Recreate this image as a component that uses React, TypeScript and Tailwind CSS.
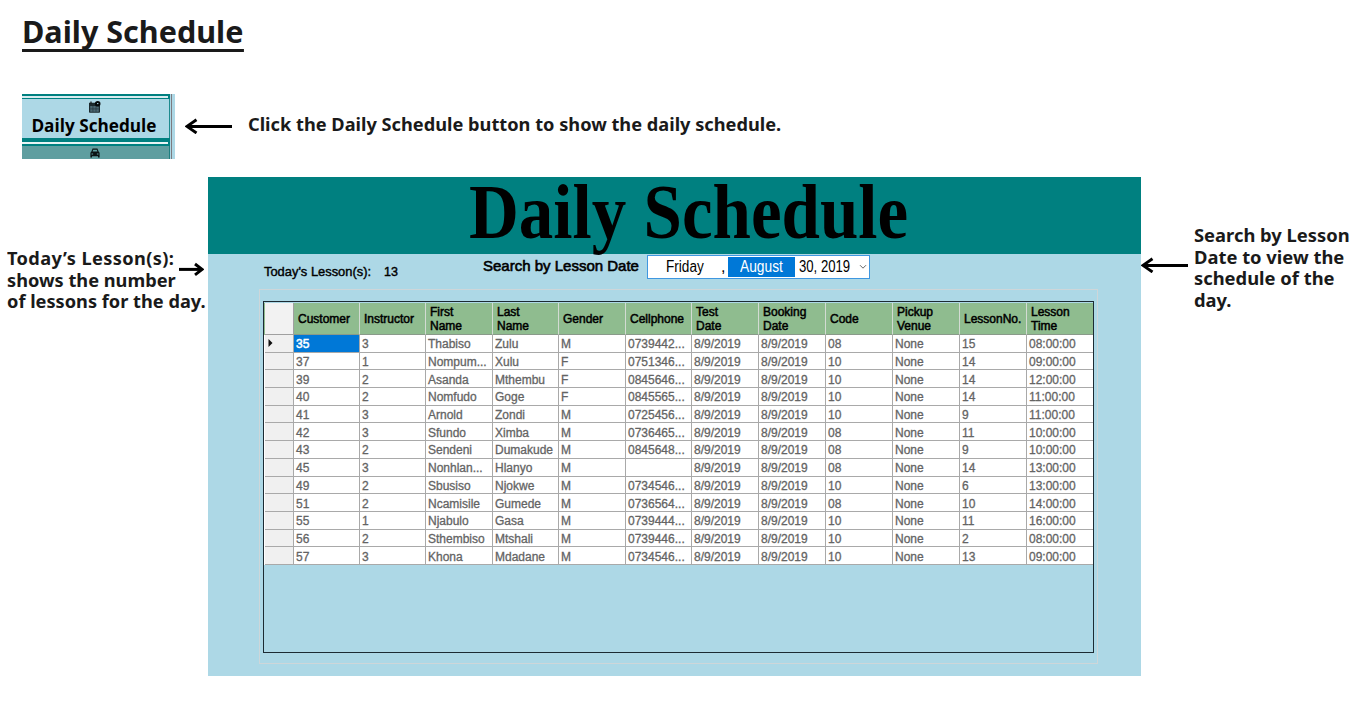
import React from 'react';

const columns = ['Customer', 'Instructor', 'First Name', 'Last Name', 'Gender', 'Cellphone', 'Test Date', 'Booking Date', 'Code', 'Pickup Venue', 'LessonNo.', 'Lesson Time'];

const rows: string[][] = [
  ['35', '3', 'Thabiso', 'Zulu', 'M', '0739442...', '08', '15', '08:00:00'],
  ['37', '1', 'Nompum...', 'Xulu', 'F', '0751346...', '10', '14', '09:00:00'],
  ['39', '2', 'Asanda', 'Mthembu', 'F', '0845646...', '10', '14', '12:00:00'],
  ['40', '2', 'Nomfudo', 'Goge', 'F', '0845565...', '10', '14', '11:00:00'],
  ['41', '3', 'Arnold', 'Zondi', 'M', '0725456...', '10', '9', '11:00:00'],
  ['42', '3', 'Sfundo', 'Ximba', 'M', '0736465...', '08', '11', '10:00:00'],
  ['43', '2', 'Sendeni', 'Dumakude', 'M', '0845648...', '08', '9', '10:00:00'],
  ['45', '3', 'Nonhlan...', 'Hlanyo', 'M', '', '08', '14', '13:00:00'],
  ['49', '2', 'Sbusiso', 'Njokwe', 'M', '0734546...', '10', '6', '13:00:00'],
  ['51', '2', 'Ncamisile', 'Gumede', 'M', '0736564...', '08', '10', '14:00:00'],
  ['55', '1', 'Njabulo', 'Gasa', 'M', '0739444...', '10', '11', '16:00:00'],
  ['56', '2', 'Sthembiso', 'Mtshali', 'M', '0739446...', '10', '2', '08:00:00'],
  ['57', '3', 'Khona', 'Mdadane', 'M', '0734546...', '10', '13', '09:00:00'],
].map(([id, ins, first, last, sex, cell, code, no, time]) => [
  id, ins, first, last, sex, cell, '8/9/2019', '8/9/2019', code, 'None', no, time,
]);

const gridCols = 'grid grid-cols-[29px_66px_66px_67px_66px_67px_66px_67px_67px_67px_67px_67px_66px]';

function Arrow({ length, flip = false }: { length: number; flip?: boolean }) {
  return (
    <svg width={length} height="16" viewBox={`0 0 ${length} 16`} fill="none" stroke="#000" className={flip ? 'shrink-0 -scale-x-100' : 'shrink-0'}>
      <path d={`M2 8.4H${length}`} strokeWidth="3" />
      <path d={flip ? 'M9 3L2 8.4L9 13.8' : 'M11.5 1.8L2 8.4L11.5 15'} strokeWidth="2.9" />
    </svg>
  );
}

function CalendarIcon() {
  return (
    <svg width="13" height="12" viewBox="0 0 13 12" className="block">
      <path d="M1 1.8h6.2a3 3 0 0 0 4.8 2.4V11a.8.8 0 0 1-.8.8H1.8A.8.8 0 0 1 1 11z" fill="#1c2a2e" />
      <path d="M2.2 5h8.6v5.8H2.2z" fill="#4c6872" />
      <path d="M2.2 7.9h8.6M4.9 5v5.8M8 5v5.8" stroke="#26373f" strokeWidth=".7" />
      <path d="M3 .4v2.2" stroke="#111" strokeWidth="1.2" />
      <circle cx="9.7" cy="2.8" r="2.8" fill="#05090a" />
      <path d="M9 2.6h1.4" stroke="#add8e6" strokeWidth="1" fill="none" />
    </svg>
  );
}

function CarIcon() {
  return (
    <svg width="10" height="10" viewBox="0 0 10 10" className="block">
      <path fillRule="evenodd" d="M2.6.5h4.8L8.6 3.6 9.6 4.8V9.6H8V8.2H2v1.4H.4V4.8L1.4 3.6zM3.2 1.7 2.6 3.6h4.8L6.8 1.7zM1.5 5.4v1.1h1.6V5.4zM6.9 5.4v1.1h1.6V5.4z" fill="#0b1314" />
    </svg>
  );
}

function MenuButton() {
  return (
    <div className="flex h-[65px] w-[153px] bg-[#add8e6]">
      <div className="flex w-[148px] flex-col">
        <div className="h-[5px] border-b border-r-2 border-t-2 border-[#008080] bg-[#d9ecf0]" />
        <div className="flex h-[39px] flex-col items-center border-r border-[#1d8b8f] pr-[2px] pt-[2px]">
          <CalendarIcon />
          <div className="mr-[2px] mt-[2px] scale-x-[1.01] whitespace-nowrap font-['Open_Sans',sans-serif] text-[17px] font-bold leading-[22px] text-black">Daily Schedule</div>
        </div>
        <div className="h-[8px] border-b-2 border-r-2 border-t-[4px] border-[#008080] bg-[#e8f4f5]" />
        <div className="flex h-[13px] justify-center overflow-hidden border-r border-[#1d7f80] bg-[#5f9ea0] pr-[2px] pt-[2px]">
          <CarIcon />
        </div>
      </div>
      <div className="ml-[1px] w-[1px] bg-[#7d7b80]" />
    </div>
  );
}

function DatePicker() {
  return (
    <div className="flex h-[24px] w-[223px] items-center border border-[#3f97e0] bg-white font-['Liberation_Sans',sans-serif] text-[16px] leading-[20px] text-black">
      <div className="w-[73px] pl-[17.5px]"><span className="inline-block origin-left scale-x-[0.85]">Friday</span></div>
      <div className="w-[7px]">,</div>
      <div className="h-[20px] w-[67px] bg-[#0078d7] pl-[12px] text-white"><span className="inline-block origin-left scale-x-[0.86]">August</span></div>
      <div className="w-[62px] whitespace-nowrap pl-[3.5px]"><span className="inline-block origin-left scale-x-[0.82]">30, 2019</span></div>
      <svg width="8" height="6" viewBox="0 0 8 6" fill="none" stroke="#666" className="ml-[2px]"><path d="M1 1.2l3 3 3-3" /></svg>
    </div>
  );
}

function LessonGrid() {
  return (
    <div className="ml-[55px] mt-[11px] h-[352px] w-[831px] border border-[#1c2b33] pt-px font-['Liberation_Sans',sans-serif] text-[12px]">
      <div className={`${gridCols} h-[32px] w-[829px] bg-[#8fbc8f] pl-px`}>
        <div className="border-b border-r border-[#a0a0a0] bg-[#f2f2f2]" />
        {columns.map((c) => (
          <div key={c} className="flex items-center border-b border-r border-b-[#8a9a8a] border-r-[#d3dbd3] pl-[4px] leading-[14px] text-black [-webkit-text-stroke:0.5px_#000] last:border-r-0">
            {c.includes(' ') ? <span>{c.split(' ')[0]}<br />{c.split(' ')[1]}</span> : c}
          </div>
        ))}
      </div>
      {rows.map((r, i) => (
        <div key={r[0]} className={`${gridCols} h-[17.69px] w-[829px] grid-rows-[17.69px] bg-white pl-px`}>
          <div className="flex items-center border-b border-r border-[#a9a9a9] bg-[#f0f0f0] pl-[3px]">
            {i === 0 && <svg width="5" height="8" viewBox="0 0 5 8"><path d="M.5 0L4.5 4L.5 8z" fill="#111" /></svg>}
          </div>
          {r.map((v, j) => (
            <div
              key={j}
              className={
                i === 0 && j === 0
                  ? 'flex items-center whitespace-nowrap border-b border-r border-[#a9a9a9] bg-[#0078d7] pl-[2px] pt-[2px] leading-[14px] text-white [-webkit-text-stroke:0.5px_#fff]'
                  : 'flex items-center whitespace-nowrap border-b border-r border-[#a9a9a9] pl-[2px] pt-[2px] leading-[14px] text-[#646464] [-webkit-text-stroke:0.3px_#646464] last:border-r-0'
              }
            >
              {v}
            </div>
          ))}
        </div>
      ))}
    </div>
  );
}

function SchedulePanel() {
  return (
    <div className="h-[499px] w-[933px] shrink-0 bg-[#add8e6]">
      <div className="h-[77px] overflow-visible bg-[#008080] pl-[260.5px]">
        <div className="inline-block origin-left scale-x-[0.885] whitespace-nowrap font-['Liberation_Serif',serif] text-[78px] font-bold leading-[70px] text-black">Daily Schedule</div>
      </div>
      <div className="flex h-[35px] whitespace-nowrap font-['Liberation_Sans',sans-serif] text-black">
        <div className="ml-[56px] mt-[8px] w-[120px] text-[12.9px] leading-[20px] [-webkit-text-stroke:0.4px_#000]">Today's Lesson(s):</div>
        <div className="mt-[8px] w-[99px] text-[12.5px] leading-[20px] [-webkit-text-stroke:0.4px_#000]">13</div>
        <div className="mt-[1.5px] w-[164px] text-[15px] leading-[20px] [-webkit-text-stroke:0.6px_#000]">Search by Lesson Date</div>
        <div className="mt-[1px]"><DatePicker /></div>
      </div>
      <div className="ml-[51px] h-[375px] w-[839px] border border-[#ced6d9]">
        <div className="-ml-[52px]"><LessonGrid /></div>
      </div>
    </div>
  );
}

export default function App() {
  return (
    <div className="flex h-[720px] w-[1360px] flex-col overflow-hidden bg-white font-['Noto_Sans',sans-serif] font-bold text-[#1a1a1a]">
      <div className="flex h-[94px] pl-[22px] pt-[14px]">
        <h1 className="h-[38px] origin-left scale-x-[1.018] whitespace-nowrap border-b-[3px] border-[#1a1a1a] text-[30px] leading-[35px]">Daily Schedule</h1>
      </div>
      <div className="flex h-[83px] pl-[22px]">
        <MenuButton />
        <div className="flex h-[65px] items-center pb-[2px] pl-[10px]">
          <Arrow length={47} />
          <p className="ml-[16px] origin-left scale-x-[1.071] whitespace-nowrap pb-[2px] text-[17px] leading-[22px]">Click the Daily Schedule button to show the daily schedule.</p>
        </div>
      </div>
      <div className="flex font-normal">
        <div className="flex w-[208px] pl-[7px] pt-[71px] font-bold">
          <p className="w-[172px] origin-left scale-x-[1.071] whitespace-nowrap text-[17px] leading-[21.5px]"><span className="tracking-[0.35px]">Today’s Lesson(s):</span><br />shows the number<br />of lessons for the day.</p>
          <div className="mt-[13px]"><Arrow length={25} flip /></div>
        </div>
        <SchedulePanel />
        <div className="flex pt-[48px] font-bold">
          <div className="mt-[32px]"><Arrow length={47} /></div>
          <p className="ml-[6px] origin-left scale-x-[1.08] whitespace-nowrap text-[17px] leading-[21.5px]">Search by Lesson<br />Date to view the<br />schedule of the<br />day.</p>
        </div>
      </div>
    </div>
  );
}
